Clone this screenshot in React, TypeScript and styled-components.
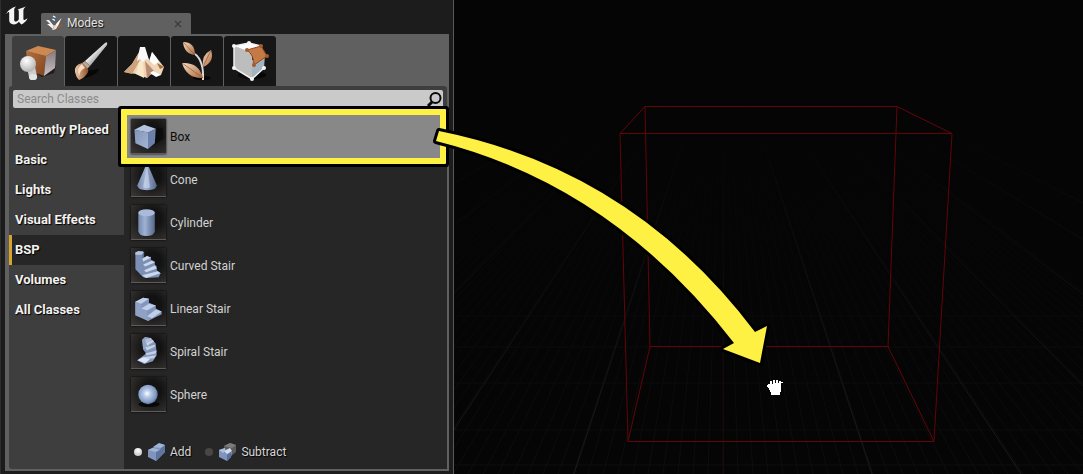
import React, { useState } from "react";
import styled, { createGlobalStyle } from "styled-components";

const GlobalStyle = createGlobalStyle`
  * { box-sizing: border-box; }
  body { margin: 0; background: #050505; font-family: Roboto, "Liberation Sans", sans-serif; }
  button, input { font-family: inherit; margin: 0; }
`;

const Editor = styled.main`
  display: flex;
  min-height: 100vh;
  overflow: hidden;
`;

const Panel = styled.section`
  flex: 0 0 454px;
  display: flex;
  flex-direction: column;
  padding: 0 4px 3px 4px;
  background: #1c1c1c;
  border-left: 1px solid #2e2e2e;
  border-right: 1px solid #5a5a5a;
`;

const TitleBar = styled.header`
  display: flex;
  align-items: flex-end;
  gap: 12px;
  height: 34px;
`;

const LogoMark = styled.svg`
  align-self: flex-start;
  width: 24px;
  height: 24px;
  margin-top: 4px;
`;

const ModesTab = styled.div`
  display: flex;
  align-items: center;
  width: 150px;
  height: 21px;
  padding: 0 9px 2px 5px;
  gap: 4px;
  background: #606060;
  border-radius: 2px 2px 0 0;
  color: #e2e2e2;
  font-size: 12px;
  text-shadow: 1px 1px 1px #111;
`;

const TabTitle = styled.span`
  flex: 1;
`;

const CloseButton = styled.button`
  display: flex;
  padding: 2px 0 0;
  border: 0;
  background: none;
  color: #3c3c3c;
`;

const PanelBody = styled.div`
  flex: 1;
  display: flex;
  flex-direction: column;
  padding: 2px 2px 2px 4px;
  background: #606060;
`;

const ModeBar = styled.div`
  display: flex;
  gap: 1px;
  padding-left: 3px;
`;

const ModeButton = styled.button<{ $active: boolean }>`
  display: flex;
  align-items: center;
  justify-content: center;
  width: 52px;
  height: 50px;
  padding: 0 0 3px;
  border: 0;
  border-radius: 3px 3px 0 0;
  background: ${(p) => (p.$active ? "#3e3e3e" : "#161616")};
`;

const ModeContent = styled.div`
  flex: 1;
  display: flex;
  flex-direction: column;
  gap: 3px;
  padding-top: 4px;
  background: #3e3e3e;
  border-radius: 3px;
`;

const SearchField = styled.label`
  display: flex;
  align-items: center;
  height: 18px;
  margin: 0 4px;
  background: #cacaca;
  border-radius: 2px;
`;

const SearchInput = styled.input`
  flex: 1;
  padding: 0 4px;
  border: 0;
  outline: 0;
  background: none;
  color: #222;
  font-size: 12px;
  &::placeholder { color: #8b8b8b; opacity: 1; }
`;

const Columns = styled.div`
  flex: 1;
  display: flex;
`;

const CategoryList = styled.nav`
  display: flex;
  flex-direction: column;
  width: 115px;
  padding-top: 4px;
`;

const Category = styled.button<{ $active: boolean }>`
  height: 30px;
  padding: 0 0 2px 3px;
  border: 0;
  border-left: 3px solid ${(p) => (p.$active ? "#d9a22b" : "transparent")};
  background: ${(p) => (p.$active ? "#262626" : "transparent")};
  color: #f2f2f2;
  font-size: 13px;
  font-weight: 700;
  text-align: left;
  white-space: nowrap;
  text-shadow: 1px 1px 1px #000;
`;

const ClassColumn = styled.div`
  flex: 1;
  display: flex;
  flex-direction: column;
  justify-content: space-between;
  padding: 4px 7px 0 3px;
  background: #262626;
`;

const ClassList = styled.div`
  display: flex;
  flex-direction: column;
`;

const ClassRow = styled.button<{ $selected: boolean }>`
  position: relative;
  display: flex;
  align-items: center;
  gap: 4px;
  height: 43px;
  padding: 0 4px;
  border: 0;
  background: ${(p) => (p.$selected ? "#888" : "transparent")};
  color: ${(p) => (p.$selected ? "#0a0a0a" : "#d2d2d2")};
  font-size: 12px;
  text-align: left;
`;

const Highlight = styled.span`
  position: absolute;
  inset: -6px;
  border: 6px solid #fff044;
  border-radius: 1px;
  box-shadow: 0 0 0 3px #000;
  z-index: 1;
`;

const Thumb = styled.svg`
  width: 35px;
  height: 35px;
  background: radial-gradient(circle at 60% 40%, #121212 30%, #3c3937 100%);
  box-shadow: 0 0 2px #000;
  border-bottom: 1px solid #5e5a58;
`;

const BrushTypes = styled.div`
  display: flex;
  gap: 14px;
  height: 34px;
  padding: 0 7px;
`;

const BrushType = styled.label`
  display: flex;
  align-items: center;
  gap: 3px;
  color: #d6d6d6;
  font-size: 12px;
  text-shadow: 1px 1px 1px #000;
`;

const Radio = styled.input`
  appearance: none;
  width: 8px;
  height: 8px;
  margin-right: 2px;
  border-radius: 50%;
  background: #4a4646;
  &:checked { background: radial-gradient(circle at 50% 30%, #fff, #b5b5b5); }
`;

const Viewport = styled.section`
  position: relative;
  flex: 1;
  min-width: 0;
  background: #050505;
`;

const Scene = styled.svg`
  position: absolute;
  top: 0;
  left: 0;
  overflow: visible;
  pointer-events: none;
  z-index: 2;
`;

const UnrealLogo = () => (
  <LogoMark viewBox="0 0 24 24" role="img" aria-label="Unreal">
    <path
      fill="#f4f4f4"
      d="M1 10C3 6 7 3.5 11 2.5C9.6 3.8 9.2 4.6 9.2 6.2V15.8C9.2 17.2 10 17.9 11.2 17.4C12.2 17 13.3 16.2 13.8 15.4V7.2C13.8 6.2 13.3 5.7 12.4 5.7C14.5 4.6 17.3 3.8 21 2.5C19.2 4 18.4 5 18.4 6.6V14.8C18.4 16.4 19.4 16.6 22.6 14.2C21.2 17.4 19 19.2 16.3 20.6L13.8 17.8C12.2 19.8 10.8 20.4 8.8 20.4C6 20.4 4.2 19 4.2 16.3V9.2C4.2 8.2 3.7 7.8 2.8 8.4C2.2 8.8 1.6 9.3 1 10Z"
    />
  </LogoMark>
);

const ModesIcon = () => (
  <svg width="17" height="17" viewBox="0 0 17 17" aria-hidden="true">
    <path d="M0 6L3 6L8 12L7 15L1 10L4 10Z" fill="#f2f2f2" />
    <path d="M8 1Q12 3 9 8L7 6Z" fill="#3d5f91" />
    <path d="M7 2L9.500 3.500M6.500 5L9 6.500" stroke="#fff" strokeWidth="1.400" />
    <path d="M15.500 4L10 10L8.500 14L12 12Z" fill="#fff" />
    <path d="M5.500 16Q8 15 8.500 11L12 11.500Q11 16 5.500 16Z" fill="#efe2d3" />
    <path d="M11 14Q15 15 16 10L12 12Z" fill="#9b5b2b" />
  </svg>
);

const PlaceIcon = () => (
  <svg width="40" height="40" viewBox="0 0 40 40" aria-hidden="true">
    <defs>
      <linearGradient id="pl-o" x1="0" y1="0" x2="1" y2="1">
        <stop offset="0" stopColor="#b0703f" /><stop offset="1" stopColor="#84451d" />
      </linearGradient>
      <linearGradient id="pl-g" x1="0" y1="0" x2="0" y2="1">
        <stop offset="0" stopColor="#85777a" /><stop offset="1" stopColor="#c9c3cc" />
      </linearGradient>
      <radialGradient id="pl-b" cx=".4" cy=".3" r=".8">
        <stop offset="0" stopColor="#fff" /><stop offset="1" stopColor="#a8a8a8" />
      </radialGradient>
    </defs>
    <path d="M19 34L38 26L36 33L24 37Z" fill="#241a16" />
    <path d="M8 11L28 16L26 36L10 30Z" fill="url(#pl-o)" />
    <path d="M8 11L20 6L38 10L28 16Z" fill="#cf8950" />
    <path d="M28 16L38 10L37 28L26 36Z" fill="url(#pl-g)" />
    <path d="M9 27H17L19 36A4 4 0 0 1 11 37Z" fill="#cdcdcd" />
    <circle cx="10" cy="24" r="8" fill="url(#pl-b)" />
    <ellipse cx="15" cy="37" rx="4" ry="3" fill="#e3e3e3" />
  </svg>
);

const PaintIcon = () => (
  <svg width="40" height="40" viewBox="0 0 40 40" aria-hidden="true">
    <defs>
      <linearGradient id="br-h" x1="0" y1="0" x2="1" y2="1">
        <stop offset=".35" stopColor="#fff" /><stop offset=".7" stopColor="#8d8d8d" />
      </linearGradient>
      <linearGradient id="br-t" x1="0" y1="0" x2="1" y2="0">
        <stop offset="0" stopColor="#f0c9a6" /><stop offset="1" stopColor="#8a5027" />
      </linearGradient>
    </defs>
    <path d="M8 39Q26 36 28 29L16 31Z" fill="#070707" />
    <path d="M34 3Q37 1 36 5L19 26L14 21Z" fill="url(#br-h)" />
    <path d="M14 21L19 26L16 29L11 23Z" fill="#b5a497" />
    <path d="M11 23Q3 25 4 32Q5 37 8 40Q15 37 17 32Q18 30 16 28Z" fill="url(#br-t)" />
    <path d="M11 24Q5 28 8 36Q9 30 14 28Z" fill="#f7dcc2" />
  </svg>
);

const LandscapeIcon = () => (
  <svg width="42" height="40" viewBox="0 0 42 40" aria-hidden="true">
    <path d="M29 12L33 17L41 27L38 35L24 34Z" fill="#efd6b8" />
    <path d="M29 12L33 17L36 22L31 25L27 21L25 24Z" fill="#fff" />
    <path d="M20 7L26 20L31 31L24 38L13 34L1 32L9 24L15 14Z" fill="#efd3b4" />
    <path d="M20 7L16 22L9 34L1 32L9 24L15 14Z" fill="#cda27c" />
    <path d="M20 20L21 38L13 34L16 22Z" fill="#f7e8c8" />
    <path d="M22 21L31 31L24 38Z" fill="#b98c70" />
    <path d="M17 7H22L26 20L23 19L20 22L17 19L14 21Z" fill="#fafafa" />
    <path d="M30 31L38 35L33 37L27 33Z" fill="#fff" />
    <path d="M34 23L41 27L37 29Z" fill="#a46b3c" />
  </svg>
);

const FoliageIcon = () => (
  <svg width="40" height="42" viewBox="0 0 40 42" aria-hidden="true">
    <defs>
      <linearGradient id="fo-l" x1="0" y1="0" x2="1" y2="1">
        <stop offset="0" stopColor="#f7dcc5" /><stop offset="1" stopColor="#a9683a" />
      </linearGradient>
    </defs>
    <ellipse cx="25" cy="39" rx="9" ry="2" fill="#050505" />
    <path d="M18 15Q27 22 26 41" fill="none" stroke="#d9d9d9" strokeWidth="2" />
    <path d="M6 3Q18 3 18 16Q7 15 6 3Z" fill="url(#fo-l)" />
    <path d="M34 11Q38 23 26 28Q24 16 34 11Z" fill="url(#fo-l)" />
    <path d="M5 24Q22 23 26 39Q10 40 5 24Z" fill="url(#fo-l)" />
    <path d="M6 3L18 16M34 11L26 28M5 24L26 39" stroke="#94572e" strokeWidth=".700" />
  </svg>
);

const GeometryIcon = () => (
  <svg width="40" height="42" viewBox="0 0 40 42" aria-hidden="true">
    <ellipse cx="22" cy="36" rx="14" ry="4" fill="#070707" />
    <path d="M4 7L22 12L22 40L4 29Z" fill="#bdbdbd" />
    <path d="M22 21L35 16L34 29L22 40Z" fill="#a3b4c0" />
    <path d="M4 7L19 4L32 7L18 12Z" fill="#fff" />
    <path d="M4 7L4 29L22 40L34 29M4 7L19 4L31 7" fill="none" stroke="#efefef" strokeWidth="1.500" />
    <path d="M17 11L31 7L37 17L24 26Q24 16 17 11Z" fill="#c57a45" stroke="#8b4a22" strokeWidth="1" />
    <g fill="#f6f6f6"><circle cx="4" cy="7" r="2" /><circle cx="19" cy="4" r="2" /><circle cx="4" cy="29" r="2" /><circle cx="22" cy="40" r="2" /><circle cx="34" cy="29" r="2" /></g>
    <g fill="#a35c30"><circle cx="17" cy="11" r="2" /><circle cx="31" cy="7" r="2" /><circle cx="37" cy="17" r="2" /><circle cx="24" cy="26" r="2" /></g>
  </svg>
);

const ThumbDefs = () => (
  <defs>
    <linearGradient id="t-side" x1="0" y1="0" x2="1" y2="0">
      <stop offset="0" stopColor="#7387ad" /><stop offset=".4" stopColor="#9fb2d3" /><stop offset="1" stopColor="#56678a" />
    </linearGradient>
    <linearGradient id="t-front" x1="0" y1="0" x2="1" y2="1">
      <stop offset="0" stopColor="#8295b9" /><stop offset="1" stopColor="#a3b5d3" />
    </linearGradient>
    <radialGradient id="t-ball" cx=".45" cy=".45" r=".6">
      <stop offset="0" stopColor="#fff" /><stop offset=".3" stopColor="#b9cbe8" /><stop offset=".75" stopColor="#8199c2" /><stop offset="1" stopColor="#4d6087" />
    </radialGradient>
  </defs>
);

const shapes: Record<string, React.ReactNode> = {
  Box: (
    <>
      <path d="M17 31L33 20L32 9L24 10Z" fill="#080808" opacity=".6" />
      <path d="M3 11L17 14L17 31L4 25Z" fill="url(#t-front)" />
      <path d="M17 14L25 10L24 25L17 31Z" fill="#6b80aa" />
      <path d="M3 11L13 6L25 10L17 14Z" fill="#b3c3de" />
    </>
  ),
  Cone: (
    <>
      <path d="M15 3L6 24Q6 29 16 29Q26 29 26 24L17 3Q16 1 15 3Z" fill="url(#t-side)" />
      <path d="M16 3L12 26Q16 28 19 26Z" fill="#d3def0" opacity=".6" />
    </>
  ),
  Cylinder: (
    <>
      <path d="M7 8V27Q8 32 15 32Q23 32 24 27V8Z" fill="url(#t-side)" />
      <ellipse cx="15.500" cy="8" rx="8.500" ry="3.500" fill="#a9badb" />
    </>
  ),
  "Curved Stair": (
    <>
      <path d="M4 4V22L12 30L15 31L28 30L30 26L26 23V19L24 17V14L20 12V9L12 10V3Z" fill="#7c90b6" />
      <path d="M4 5L7 3L13 4L11 7L4 7Z" fill="#b5c5de" />
      <path d="M11 7L13 4V10L11 13Z" fill="#5b6e95" />
      <path d="M11 11L16 8L20 10L12 14ZM12 17L21 13L24 15L14 19ZM13 23L24 18L26 21L15 25ZM11 28L27 24L30 26L15 31Z" fill="#cbd8ed" />
    </>
  ),
  "Linear Stair": (
    <>
      <path d="M4 11L12 7L18 8V12L25 15V18L31 21V24L17 31L4 25Z" fill="#8397bd" />
      <path d="M4 11L10 13V18L16 21V26L18 31L4 25Z" fill="#8fa2c5" />
      <path d="M4 11L12 7L18 8L10 13ZM10 18L18 13L25 15L16 20ZM16 26L25 19L31 21L21 28Z" fill="#c0cfe8" />
    </>
  ),
  "Spiral Stair": (
    <>
      <path d="M11 6L14 3L20 4L25 10L26 22L22 28L13 31L6 27L15 20L12 16Z" fill="#8497ba" />
      <path d="M11 6L14 3L18 4V14L12 16Z" fill="#90a3c3" />
      <path d="M15 9L22 6L23 8L16 12ZM14 14L24 11V13L16 17ZM14 20L26 17L25 20L16 22ZM12 24L25 22L23 25L14 26Z" fill="#c3d0e6" />
      <path d="M6 27L12 24L19 26L14 30Z" fill="#dce6f7" />
      <path d="M14 6L20 4L21 6L15 9Z" fill="#b3c2da" />
    </>
  ),
  Sphere: (
    <>
      <ellipse cx="18" cy="28" rx="11" ry="3" fill="#080808" />
      <circle cx="17" cy="18" r="10" fill="url(#t-ball)" />
    </>
  ),
};

const AddIcon = () => (
  <svg width="20" height="20" viewBox="0 0 20 20" aria-hidden="true">
    <path d="M1 8L7 5L12 2L18 3V10L14 14L9 19L1 15Z" fill="#7f95bf" />
    <path d="M6 5L12 1L18 3L14 6ZM1 8L6 6L13 8L9 10Z" fill="#a3b5d6" />
    <path d="M14 6L18 3V10L13 15V8ZM9 10L13 8V15L9 19Z" fill="#5f759f" />
  </svg>
);

const SubtractIcon = () => (
  <svg width="20" height="20" viewBox="0 0 20 20" aria-hidden="true">
    <path d="M6 4L12 1L18 3V10L13 14L7 12Z" fill="#5c5c5c" />
    <path d="M6 4L12 1L18 3L14 6Z" fill="#7c7c7c" />
    <path d="M1 8L7 6L8 9L14 10L13 15L9 19L1 15Z" fill="#7e94bd" />
    <path d="M6 9L12 6L14 9L9 12Z" fill="#d0dcf0" />
    <path d="M1 8L7 6V9L5 11Z" fill="#aebedb" />
    <path d="M9 13L13 10V15L9 19Z" fill="#5a6f99" />
  </svg>
);

const SearchIcon = () => (
  <svg width="17" height="18" viewBox="0 0 17 18" aria-hidden="true">
    <circle cx="9.500" cy="8" r="5" fill="none" stroke="#0a0a0a" strokeWidth="2" />
    <path d="M6 12L2 16" stroke="#0a0a0a" strokeWidth="3" />
  </svg>
);

const VANISH_X = 269;
const VANISH_Y = 20;
const majorLines = [-5, -4, -3, -2, -1, 1, 2, 3, 4, 5, 6];
const minorLines = Array.from({ length: 81 }, (_, i) => i - 40);
const crossLines = [316, 347, 383, 430, 465];

const ViewportScene = () => (
  <Scene width="629" height="474" viewBox="0 0 629 474" aria-hidden="true">
    <defs>
      <linearGradient id="floor" x1="0" y1="0" x2="0" y2="1">
        <stop offset=".200" stopColor="#000" /><stop offset="1" stopColor="#fff" />
      </linearGradient>
      <mask id="fade" maskUnits="userSpaceOnUse" x="0" y="0" width="629" height="474">
        <rect width="629" height="474" fill="url(#floor)" />
      </mask>
      <clipPath id="view"><rect width="629" height="474" /></clipPath>
    </defs>
    <g clipPath="url(#view)">
      <g mask="url(#fade)" stroke="#0e0e0e" strokeWidth="1">
        {minorLines.map((n) => (
          <line key={n} x1={VANISH_X + n * 5} y1="170" x2={VANISH_X + n * 15} y2="474" />
        ))}
        {crossLines.map((y) => <line key={y} x1="0" y1={y} x2="629" y2={y} />)}
      </g>
      <g mask="url(#fade)" stroke="#1c1c1c" strokeWidth="1">
        {majorLines.map((n) => (
          <line key={n} x1={VANISH_X + n * 20} y1={VANISH_Y + 61} x2={VANISH_X + n * 149} y2="474" />
        ))}
      </g>
      <path d="M269.500 100V474" stroke="#1a0a0c" mask="url(#fade)" />
      <g fill="none" stroke="#620509" strokeWidth="1">
        <path d="M166 133.500L191 106.500H443L498 133.500Z" />
        <path d="M174 441.500L196 346.500H434L480 441.500Z" />
        <path d="M166 134L174 441M191 106L196 347M443 106L434 347M498 134L480 441" />
      </g>
    </g>
    <path
      d="M-15 131Q179 170 301 332L313 326L306 363L269 349L280 343Q158 185 -18 141Z"
      fill="none" stroke="#000" strokeWidth="6" strokeLinejoin="round"
    />
    <path d="M-15 131Q179 170 301 332L313 326L306 363L269 349L280 343Q158 185 -18 141Z" fill="#fff044" />
    <path
      d="M314 384H316V381H318V384H319V380H321V383H322V380H324V383H325V381H327V384H328V382H329V383H327V382H328V382H327H328V384H327H326H327V382H328H327V392H326V395H317V392H316V390H315V388H314V387H313V385H314Z"
      fill="#fff" shapeRendering="crispEdges"
    />
  </Scene>
);

const modes = [
  { name: "Place", icon: <PlaceIcon /> },
  { name: "Paint", icon: <PaintIcon /> },
  { name: "Landscape", icon: <LandscapeIcon /> },
  { name: "Foliage", icon: <FoliageIcon /> },
  { name: "Geometry", icon: <GeometryIcon /> },
];
const categories = ["Recently Placed", "Basic", "Lights", "Visual Effects", "BSP", "Volumes", "All Classes"];

export default function App() {
  const [mode, setMode] = useState("Place");
  const [category, setCategory] = useState("BSP");
  const [selected, setSelected] = useState("Box");

  return (
    <Editor>
      <GlobalStyle />
      <Panel>
        <TitleBar>
          <UnrealLogo />
          <ModesTab>
            <ModesIcon />
            <TabTitle>Modes</TabTitle>
            <CloseButton aria-label="Close tab">
              <svg width="8" height="8" viewBox="0 0 8 8"><path d="M1 1L7 7M7 1L1 7" stroke="currentColor" strokeWidth="1.200" /></svg>
            </CloseButton>
          </ModesTab>
        </TitleBar>
        <PanelBody>
          <ModeBar>
            {modes.map((m) => (
              <ModeButton key={m.name} $active={m.name === mode} aria-label={m.name} onClick={() => setMode(m.name)}>
                {m.icon}
              </ModeButton>
            ))}
          </ModeBar>
          <ModeContent>
            <SearchField>
              <SearchInput type="text" placeholder="Search Classes" aria-label="Search Classes" />
              <SearchIcon />
            </SearchField>
            <Columns>
              <CategoryList>
                {categories.map((c) => (
                  <Category key={c} $active={c === category} onClick={() => setCategory(c)}>{c}</Category>
                ))}
              </CategoryList>
              <ClassColumn>
                <ClassList>
                  {Object.keys(shapes).map((name) => (
                    <ClassRow key={name} $selected={name === selected} onClick={() => setSelected(name)}>
                      <Thumb viewBox="0 0 35 35" aria-hidden="true">
                        <ThumbDefs />
                        {shapes[name]}
                      </Thumb>
                      {name}
                      {name === selected && <Highlight />}
                    </ClassRow>
                  ))}
                </ClassList>
                <BrushTypes role="radiogroup" aria-label="Brush type">
                  <BrushType><Radio type="radio" name="brush" defaultChecked /><AddIcon />Add</BrushType>
                  <BrushType><Radio type="radio" name="brush" /><SubtractIcon />Subtract</BrushType>
                </BrushTypes>
              </ClassColumn>
            </Columns>
          </ModeContent>
        </PanelBody>
      </Panel>
      <Viewport>
        <ViewportScene />
      </Viewport>
    </Editor>
  );
}
